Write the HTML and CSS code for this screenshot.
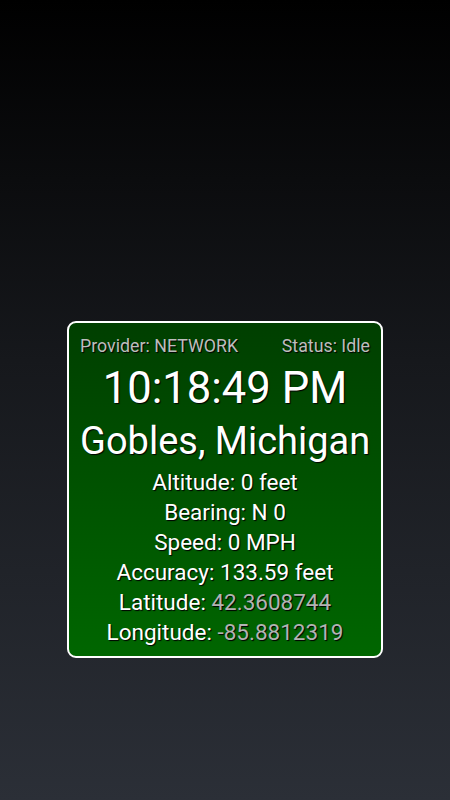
FILE: index.html
```html
<!DOCTYPE html>
<html lang="en">
<head>
  <meta charset="UTF-8" />
  <title>Location Widget</title>
  <link rel="stylesheet" href="styles.css">
</head>
<body>
  <div class="screen">
    <div class="card">
      <div class="top-row">
        <span>Provider: NETWORK</span>
        <span>Status: Idle</span>
      </div>
      <div class="time">10:18:49 PM</div>
      <div class="city">Gobles, Michigan</div>
      <div class="info">Altitude: 0 feet</div>
      <div class="info">Bearing: N 0</div>
      <div class="info">Speed: 0 MPH</div>
      <div class="info">Accuracy: 133.59 feet</div>
      <div class="info">Latitude: <span class="coord">42.3608744</span></div>
      <div class="info">Longitude: <span class="coord">-85.8812319</span></div>
    </div>
  </div>
</body>
</html>
```

FILE: styles.css
```css
body {
  margin: 0;
  padding: 0;
  background: linear-gradient(to bottom, #000000 0%, #16181c 45%, #2b2f37 100%);
  color: #ffffff;
  font-family: Roboto, "Noto Sans", sans-serif;
  height: 800px;
  overflow: hidden;
}

.screen {
  display: flex;
  justify-content: center;
  padding-top: 321px;
}

.card {
  width: 290px;
  padding: 13px 11px 9px;
  border: 2px solid #ffffff;
  border-radius: 9px;
  background: linear-gradient(to bottom, #003f00, #006600);
  text-align: center;
  text-shadow: 1px 1px 1px #000000;
  white-space: nowrap;
}

.top-row {
  display: flex;
  justify-content: space-between;
  font-size: 17.8px;
  line-height: 20px;
  color: #bdbdbd;
}

.time {
  margin-top: 7px;
  font-size: 43.6px;
  line-height: 52px;
}

.city {
  font-size: 38px;
  line-height: 52px;
}

.info {
  font-size: 22.5px;
  line-height: 30px;
}

.coord {
  color: #b3b3b3;
}
```
